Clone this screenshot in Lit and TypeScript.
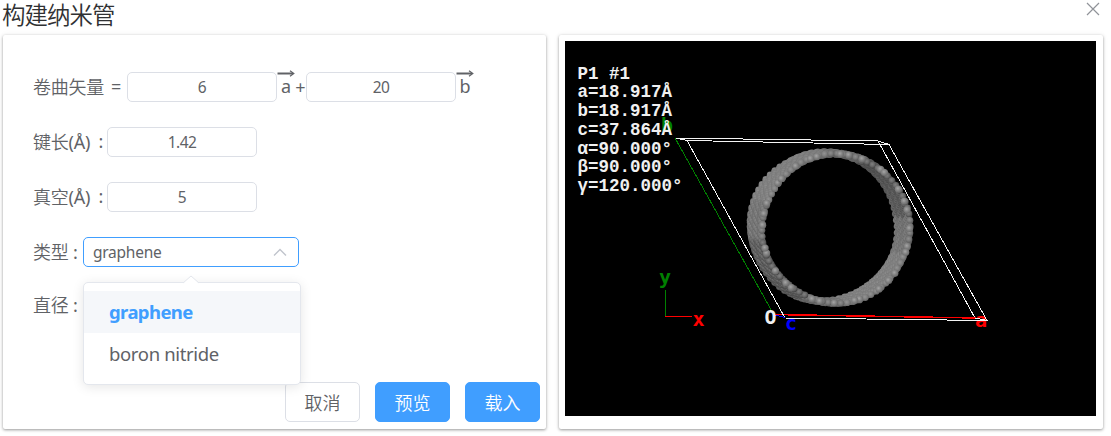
import { LitElement, html, svg, css } from "lit";
import { customElement, state } from "lit/decorators.js";

interface Atom { x: number; y: number; r: number; kind: string }

/** Balls of the tube wall, ordered from the far end to the near one. */
function tubeAtoms(): Atom[] {
  const atoms: Atom[] = [];
  const rings = 17;
  const count = 74;
  for (let k = 0; k < rings; k++) {
    const t = k / (rings - 1);
    const cx = 823.5 + 12.5 * t;
    const cy = 226.5 + 2 * t;
    for (let i = 0; i < count; i++) {
      const jitter = Math.sin(i * 12.9 + k * 7.3);
      const angle = ((i + (k % 2) * 0.5 + k * 0.17) / count) * Math.PI * 2;
      const radius = 73.6 + jitter * 0.8;
      const side = Math.cos(angle * 2 + Math.PI / 2 - 0.25);
      atoms.push({
        x: cx + radius * Math.cos(angle),
        y: cy + (radius + 0.8) * Math.sin(angle),
        r: 3.4,
        kind: side < -0.45 ? "lit" : side > 0.55 ? "dim" : "mid",
      });
    }
  }
  for (let i = 0; i < 32; i++) {
    const angle = ((i + 0.35 * Math.sin(i * 2.4)) / 32) * Math.PI * 2;
    atoms.push({ x: 836 + 73.5 * Math.cos(angle), y: 228.5 + 74.5 * Math.sin(angle), r: 3.6, kind: "near" });
  }
  return atoms;
}

@customElement("structure-viewer")
class StructureViewer extends LitElement {
  static styles = css`
    :host { display: block; width: 531px; height: 375px; background: #000; }
    svg { display: block; }
    .edge { stroke-width: 1; fill: none; shape-rendering: crispEdges; }
    .white { stroke: #f4f4f4; }
    .green { stroke: #008000; }
    .red { stroke: #f00; }
    .thick { stroke-width: 1.5; }
    .blue { stroke: #00f; }
    .info { font: bold 17.5px "Liberation Mono", monospace; fill: #f0f0f0; }
    .axis { font: bold 20px "DejaVu Sans Mono", monospace; }
    .fg { fill: #008000; }
    .fr { fill: #f00; }
    .fb { fill: #00f; }
    .fw { fill: #f0f0f0; }
  `;
  private atoms = tubeAtoms();
  private info = ["P1 #1", "a=18.917Å", "b=18.917Å", "c=37.864Å", "α=90.000°", "β=90.000°", "γ=120.000°"];
  private ball(id: string, hi: string, base: string, rim: string) {
    return svg`<radialGradient id=${id} cx="0.42" cy="0.4" r="0.6">
      <stop offset="0" stop-color=${hi}></stop><stop offset="0.55" stop-color=${base}></stop><stop offset="1" stop-color=${rim}></stop>
    </radialGradient>`;
  }
  render() {
    return html`<svg width="531" height="375" viewBox="565 41 531 375">
      <defs>
        ${this.ball("lit", "#949494", "#808080", "#686868")}
        ${this.ball("mid", "#8e8e8e", "#787878", "#5a5a5a")}
        ${this.ball("dim", "#808080", "#686868", "#444444")}
        ${this.ball("near", "#a6a6a6", "#828282", "#6a6a6a")}
      </defs>
      <text class="axis fg" x="661" y="132">b</text>
      <path class="edge white" d="M675 138L878 141L975 318M675 138L687 140.500"></path>
      <path class="edge green" d="M675 138L774 315"></path>
      <path class="edge red thick" d="M773 314.500L976 318"></path>
      ${this.atoms.map((a) => svg`<circle cx=${a.x.toFixed(1)} cy=${a.y.toFixed(1)} r=${a.r} fill="url(#${a.kind})"></circle>`)}
      <text class="axis fr" x="975" y="327">a</text>
      <path class="edge white" d="M687 140.500L889 144.500L987 320.500L785 318L687 140.500M878 141L889 144.500M975 318L987 320.500"></path>
      <path class="edge blue" d="M773 314.500L785 317.500"></path>
      <text class="axis fw" x="764.500" y="324" textLength="12" lengthAdjust="spacingAndGlyphs">O</text>
      <text class="axis fb" x="785" y="330">c</text>
      <path class="edge green" d="M665.500 290V316"></path>
      <path class="edge red" d="M665 316.500H692"></path>
      <text class="axis fg" x="659" y="284">y</text>
      <text class="axis fr" x="692.500" y="326">x</text>
      ${this.info.map((s, i) => svg`<text class="info" x="577.500" y=${78.5 + i * 18.75} textLength=${s.length * 10.5}>${s}</text>`)}
    </svg>`;
  }
}

@customElement("app-root")
class AppRoot extends LitElement {
  static styles = css`
    :host { display: block; height: 436px; background: #fff; color: #606266; overflow: hidden;
      font: 18px/26px "Noto Sans", "Noto Sans CJK SC", sans-serif; }
    * { box-sizing: border-box; }
    .head { height: 35px; display: flex; justify-content: space-between; align-items: flex-start; padding: 0 11px 0 2px; }
    .title { font: 350 23.5px/29px "Noto Sans CJK SC", sans-serif; letter-spacing: -1px; color: #303133; }
    .close { width: 14px; height: 14px; margin-top: 2px; }
    .panels { display: flex; gap: 13px; padding-left: 3px; }
    .card { height: 394px; background: #fff; border-radius: 2px; box-shadow: 0 1px 3px rgba(0,0,0,.38), 0 0 6px rgba(0,0,0,.06); }
    .form { width: 543px; display: flex; flex-direction: column; padding: 37px 6px 7px 30px; }
    .view { width: 544px; padding: 6px; }
    .row { height: 30px; margin-bottom: 25px; display: flex; align-items: center; }
    .row.type { margin-bottom: 23px; }
    .label { white-space: pre; letter-spacing: -0.25px; padding-bottom: 2px; }
    .label:not(.l3) { display: flex; justify-content: space-between; }
    .l1 { width: 94px; padding-right: 6px; } .l2 { width: 74px; padding-right: 4px; } .l3 { width: 50px; }
    .l1, .l2 { flex: none; }
    .field { width: 150px; height: 30px; border: 1px solid #dcdfe6; border-radius: 5px; text-align: center;
      font: 15.5px/29px "Noto Sans", sans-serif; letter-spacing: -0.6px; background: #fff; }
    .vec { display: flex; flex-direction: column; align-items: center; width: 18px; height: 30px; }
    .vec svg { display: block; height: 7px; margin-top: -2px; flex: none; }
    .vec span { line-height: 19px; }
    .plus { width: 11px; text-align: center; }
    .select { position: relative; width: 216px; height: 30px; border: 1px solid #409eff; border-radius: 5px;
      padding: 0 10px 0 9px; display: flex; align-items: center; justify-content: space-between;
      font-size: 15.5px; }
    .picked { letter-spacing: -0.25px; }
    .menu { position: absolute; z-index: 2; left: -1px; top: 44px; width: 218px; height: 103px; padding-top: 8px;
      background: #fff; border: 1px solid #e4e7ed; border-radius: 5px; box-shadow: 0 2px 12px rgba(0,0,0,.1); }
    .tip { position: absolute; left: 98px; top: -8px; }
    .option { height: 42px; padding-left: 25px; font-size: 18.5px; line-height: 42px; letter-spacing: -0.35px; }
    .chosen { background: #f5f7fa; color: #409eff; font-weight: 700; letter-spacing: -0.6px; }
    .actions { display: flex; gap: 15px; justify-content: flex-end; margin-top: auto; }
    .btn { width: 75px; height: 40px; border: 1px solid #dcdfe6; border-radius: 5px; text-align: center; line-height: 38px; background: #fff; }
    .primary { background: #409eff; border-color: #409eff; color: #fff; }
    .cjk { font-family: "Noto Sans CJK SC", sans-serif; font-weight: 350; }
  `;
  @state() selected = "graphene";
  private arrow = html`<svg width="18" height="7" viewBox="0 0 18 7" fill="none" stroke="#606266"><path d="M.5 3.500H16" stroke-width="2"></path><path d="M13 .8L16.800 3.500L13 6.200" stroke-width="1.200"></path></svg>`;
  render() {
    return html`
      <div class="head">
        <div class="title">构建纳米管</div>
        <svg class="close" viewBox="0 0 14 14"><path d="M1 1L13 13M13 1L1 13" stroke="#909399" stroke-width="1.200"></path></svg>
      </div>
      <div class="panels">
        <div class="card form">
          <div class="row"><span class="label l1"><span class="cjk">卷曲矢量</span><span>=</span></span><div class="field">6</div>
            <div class="vec">${this.arrow}<span>a</span></div><span class="plus">+</span><div class="field">20</div>
            <div class="vec">${this.arrow}<span>b</span></div></div>
          <div class="row"><span class="label l2"><span><span class="cjk">键长</span>(Å)</span><span>:</span></span><div class="field">1.42</div></div>
          <div class="row"><span class="label l2"><span><span class="cjk">真空</span>(Å)</span><span>:</span></span><div class="field">5</div></div>
          <div class="row type"><span class="label l3"><span class="cjk">类型</span> :</span>
            <div class="select"><span class="picked">${this.selected}</span>
              <svg width="16" height="10" viewBox="0 0 16 10" fill="none"><path d="M2 8.500L8 2.500L14 8.500" stroke="#c0c4cc" stroke-width="1.400"></path></svg>
              <div class="menu">
                <svg class="tip" width="18" height="9" viewBox="0 0 18 9"><path d="M1 8.500L9 1L17 8.500V9H1Z" fill="#fff"></path><path d="M1 8L9 1L17 8" fill="none" stroke="#e4e7ed"></path></svg>
                ${["graphene", "boron nitride"].map((o) => html`<div class="option ${o === this.selected ? "chosen" : ""}">${o}</div>`)}
              </div>
            </div></div>
          <div class="row"><span class="label l3"><span class="cjk">直径</span> :</span></div>
          <div class="actions"><div class="btn cjk">取消</div><div class="btn primary cjk">预览</div><div class="btn primary cjk">载入</div></div>
        </div>
        <div class="card view"><structure-viewer></structure-viewer></div>
      </div>`;
  }
}
